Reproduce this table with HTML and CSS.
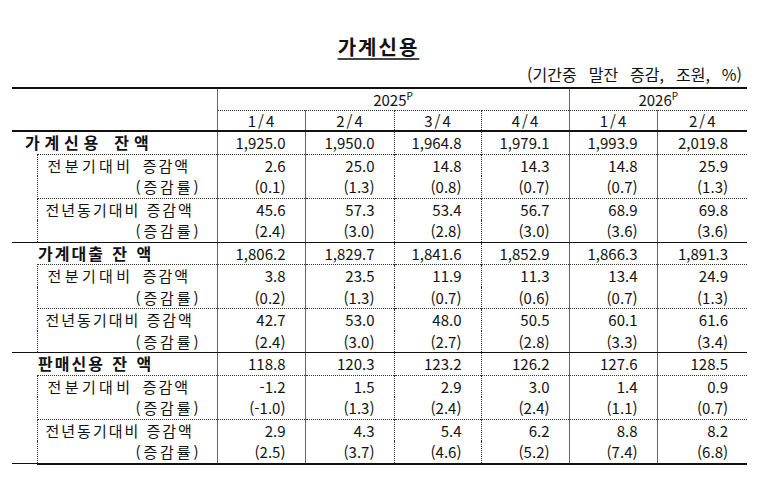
FILE: index.html
```html
<!DOCTYPE html>
<html lang="ko">
<head>
<meta charset="utf-8">
<title>가계신용</title>
<link rel="stylesheet" href="styles.css">
</head>
<body>
<div class="page">
  <h1 class="title"><span>가계신용</span></h1>
  <p class="unit">(기간중 말잔 증감, 조원, %)</p>
  <table class="tbl">
    <colgroup>
      <col class="w-gut"><col class="w-lab">
      <col class="w-88"><col class="w-89"><col class="w-87"><col class="w-88"><col class="w-88"><col class="w-90">
    </colgroup>
    <thead>
      <tr class="h1">
        <th class="corner" colspan="2" rowspan="2"></th>
        <th class="yr" colspan="4">2025<sup>P</sup></th>
        <th class="yr y26" colspan="2">2026<sup>P</sup></th>
      </tr>
      <tr class="h2">
        <th>1/4</th><th>2/4</th><th>3/4</th><th>4/4</th><th>1/4</th><th>2/4</th>
      </tr>
    </thead>
    <tbody>
      <tr class="main">
        <td class="lab big wide" colspan="2">가계신용 잔액</td>
        <td>1,925.0</td><td>1,950.0</td><td>1,964.8</td><td>1,979.1</td><td>1,993.9</td><td>2,019.8</td>
      </tr>
      <tr class="dtop">
        <td class="gut" rowspan="4"></td>
        <td class="lab sub"><span class="sp">전분기대비</span> 증감액</td>
        <td>2.6</td><td>25.0</td><td>14.8</td><td>14.3</td><td>14.8</td><td>25.9</td>
      </tr>
      <tr>
        <td class="lab rate">(증감률)</td>
        <td>(0.1)</td><td>(1.3)</td><td>(0.8)</td><td>(0.7)</td><td>(0.7)</td><td>(1.3)</td>
      </tr>
      <tr class="dtop">
        <td class="lab sub2">전년동기대비 증감액</td>
        <td>45.6</td><td>57.3</td><td>53.4</td><td>56.7</td><td>68.9</td><td>69.8</td>
      </tr>
      <tr class="end">
        <td class="lab rate">(증감률)</td>
        <td>(2.4)</td><td>(3.0)</td><td>(2.8)</td><td>(3.0)</td><td>(3.6)</td><td>(3.6)</td>
      </tr>

      <tr class="main">
        <td class="lab big" colspan="2">가계대출 잔 액</td>
        <td>1,806.2</td><td>1,829.7</td><td>1,841.6</td><td>1,852.9</td><td>1,866.3</td><td>1,891.3</td>
      </tr>
      <tr class="dtop">
        <td class="gut" rowspan="4"></td>
        <td class="lab sub"><span class="sp">전분기대비</span> 증감액</td>
        <td>3.8</td><td>23.5</td><td>11.9</td><td>11.3</td><td>13.4</td><td>24.9</td>
      </tr>
      <tr>
        <td class="lab rate">(증감률)</td>
        <td>(0.2)</td><td>(1.3)</td><td>(0.7)</td><td>(0.6)</td><td>(0.7)</td><td>(1.3)</td>
      </tr>
      <tr class="dtop">
        <td class="lab sub2">전년동기대비 증감액</td>
        <td>42.7</td><td>53.0</td><td>48.0</td><td>50.5</td><td>60.1</td><td>61.6</td>
      </tr>
      <tr class="end">
        <td class="lab rate">(증감률)</td>
        <td>(2.4)</td><td>(3.0)</td><td>(2.7)</td><td>(2.8)</td><td>(3.3)</td><td>(3.4)</td>
      </tr>

      <tr class="main">
        <td class="lab big" colspan="2">판매신용 잔 액</td>
        <td>118.8</td><td>120.3</td><td>123.2</td><td>126.2</td><td>127.6</td><td>128.5</td>
      </tr>
      <tr class="dtop">
        <td class="gut" rowspan="4"></td>
        <td class="lab sub"><span class="sp">전분기대비</span> 증감액</td>
        <td>-1.2</td><td>1.5</td><td>2.9</td><td>3.0</td><td>1.4</td><td>0.9</td>
      </tr>
      <tr>
        <td class="lab rate">(증감률)</td>
        <td>(-1.0)</td><td>(1.3)</td><td>(2.4)</td><td>(2.4)</td><td>(1.1)</td><td>(0.7)</td>
      </tr>
      <tr class="dtop">
        <td class="lab sub2">전년동기대비 증감액</td>
        <td>2.9</td><td>4.3</td><td>5.4</td><td>6.2</td><td>8.8</td><td>8.2</td>
      </tr>
      <tr class="end last">
        <td class="lab rate">(증감률)</td>
        <td>(2.5)</td><td>(3.7)</td><td>(4.6)</td><td>(5.2)</td><td>(7.4)</td><td>(6.8)</td>
      </tr>
    </tbody>
  </table>
</div>
</body>
</html>
```

FILE: styles.css
```css
* { box-sizing: border-box; }

body {
  margin: 0;
  background: #ffffff;
  color: #111111;
  font-family: "Noto Sans CJK KR", "Noto Sans", sans-serif;
}

.page {
  width: 770px;
  padding-left: 12px;
}

.title {
  width: 735px;
  margin: 35px 0 0;
  padding-right: 2px;
  text-align: center;
  font-size: 20px;
  line-height: 24px;
  font-weight: 700;
  letter-spacing: 2px;
}

.title span {
  text-decoration: underline;
  text-decoration-thickness: 1.5px;
  text-underline-offset: 3px;
  text-decoration-color: #444;
}

.unit {
  width: 735px;
  margin: 5px 0 0;
  padding-right: 5px;
  text-align: right;
  font-size: 16px;
  line-height: 20px;
  word-spacing: 7.5px;
}

.tbl {
  width: 735px;
  margin-top: 3px;
  border-collapse: collapse;
  table-layout: fixed;
  font-size: 15px;
}

.w-gut { width: 25px; }
.w-lab { width: 180px; }
.w-87 { width: 87px; }
.w-88 { width: 88px; }
.w-89 { width: 89px; }
.w-90 { width: 90px; }

.tbl th,
.tbl td {
  padding: 0;
  font-weight: 400;
  white-space: nowrap;
}

/* header */
.h1 th {
  border-top: 2px solid #111;
  line-height: 21px;
  text-align: center;
}
.h2 th {
  border-bottom: 2px solid #111;
  line-height: 19px;
  text-align: center;
  letter-spacing: 2px;
  padding-left: 2px;
}
.corner {
  border-bottom: 2px solid #111;
  border-right: 1px solid #666;
}
.yr {
  border-bottom: 1px dotted #333;
}
.y26 { border-left: 1px solid #666; }

.yr sup {
  font-size: 10px;
  line-height: 0;
  vertical-align: 6px;
}

.h2 th:nth-child(2),
.h2 th:nth-child(5),
.h2 th:nth-child(6) { border-left: 1px solid #666; }
.h2 th:nth-child(3),
.h2 th:nth-child(4) { border-left: 1px dotted #333; }

/* body */
.tbl tbody td {
  line-height: 21.5px;
  text-align: right;
  padding-right: 19px;
}
.tbl tbody td:nth-last-child(6),
.tbl tbody td:nth-last-child(5),
.tbl tbody td:nth-last-child(2),
.tbl tbody td:nth-last-child(1) { border-left: 1px solid #666; }
.tbl tbody td:nth-last-child(4),
.tbl tbody td:nth-last-child(3) { border-left: 1px dotted #333; }

.dtop td { border-top: 1px dotted #333; }
.dtop td.gut { border-top: none; }

.end td { border-bottom: 1px solid #111; }
.tbl td.gut {
  border-right: 1px dotted #333;
  border-bottom: 1px solid #111;
  padding: 0;
}
.last td,
.last ~ tr td { border-bottom: 2px solid #111; }

.tbl tbody td.lab {
  text-align: left;
  padding-right: 0;
  font-size: 15px;
}
.tbl tbody td.lab.big {
  font-size: 16px;
  font-weight: 700;
  padding-left: 26px;
  letter-spacing: 2px;
  word-spacing: 1px;
}
.tbl tbody td.lab.big.wide {
  padding-left: 13px;
  letter-spacing: 4.8px;
  word-spacing: 2px;
}
.lab.sub {
  padding-left: 10px;
  letter-spacing: 2px;
  word-spacing: 3px;
}
.lab.sub .sp { letter-spacing: 3.4px; }
.lab.sub2 {
  padding-left: 8px;
  letter-spacing: 2px;
}
.tbl tbody td.lab.rate {
  text-align: right;
  padding-right: 15px;
  letter-spacing: 2.9px;
}
```
